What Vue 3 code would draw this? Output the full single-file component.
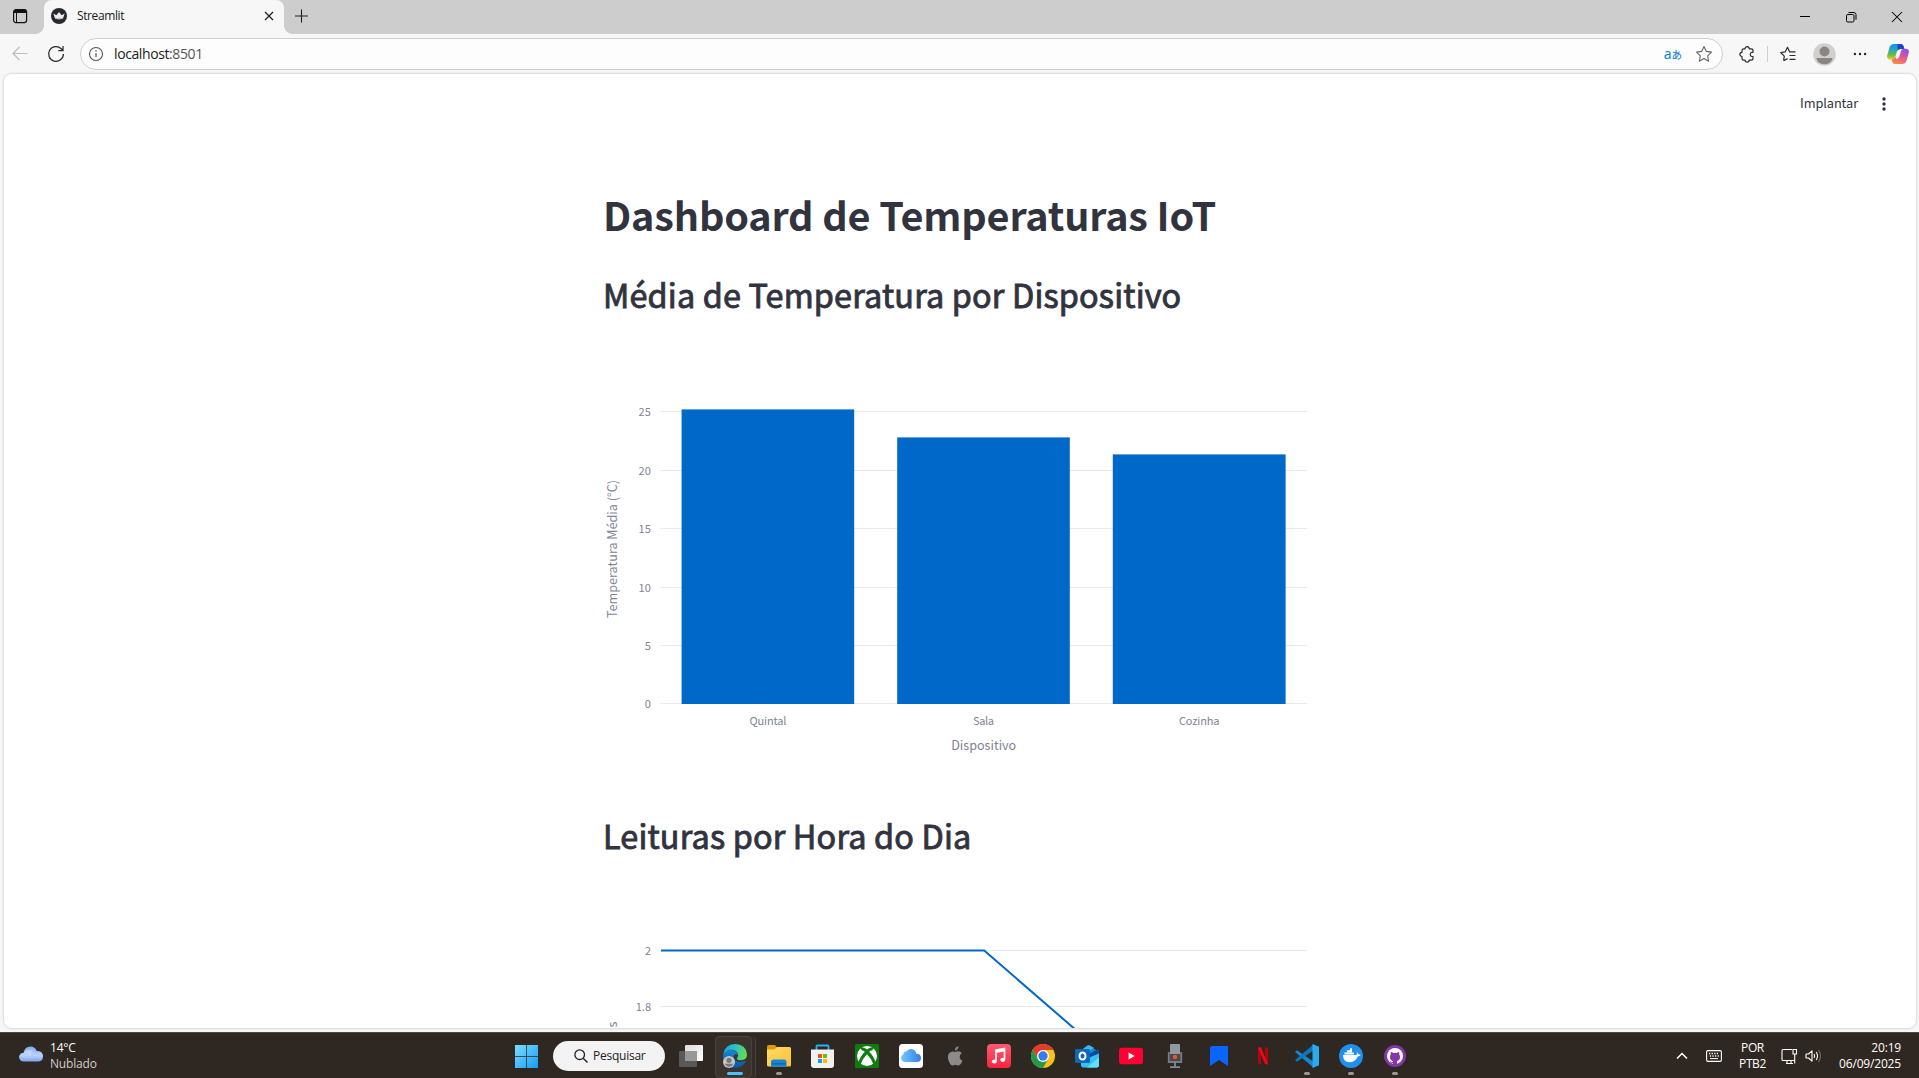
<script setup>
const barTicks = [
  { label: '25', y: 411.5 },
  { label: '20', y: 470.5 },
  { label: '15', y: 528.5 },
  { label: '10', y: 587.5 },
  { label: '5', y: 645.5 },
  { label: '0', y: 703.5 },
]
const bars = [
  { name: 'Quintal', x: 681.6, top: 409.4, w: 172.6, len: 37 },
  { name: 'Sala', x: 897.2, top: 437.4, w: 172.6, len: 21 },
  { name: 'Cozinha', x: 1112.8, top: 454.4, w: 172.8, len: 40.5 },
]
const lineTicks = [
  { label: '2', y: 950.5 },
  { label: '1.8', y: 1006.5 },
]
const X0 = 604
const Y1 = 360
const Y2 = 900
</script>

<template>
  <div class="screen">
    <header class="tabstrip">
      <div class="workspaces">
        <svg width="16" height="16" viewBox="0 0 16 16"><rect x="1.6" y="1.6" width="13" height="13" rx="2.4" fill="none" stroke="#111" stroke-width="1.2" /><path d="M1.5 5V4a2.5 2.5 0 0 1 2.5-2.5h8A2.5 2.5 0 0 1 14.500 4v1z" fill="#111" /><path d="M4.500 5v9.500" stroke="#111" stroke-width="1" /></svg>
      </div>
      <div class="tab">
        <svg class="favicon" width="16" height="16" viewBox="0 0 16 16"><circle cx="8" cy="8" r="8" fill="#262730" /><path d="M2.300 5.500 5.300 7.200 8 4 10.700 7.200 13.700 5.500 12 10.600Q8 12 4 10.600z" fill="#eee" /><path d="M4 9.500q4 1.200 8 0l-.4 1.300q-3.600 1-7.200 0z" fill="#bbb" /></svg>
        <span class="tab-title">Streamlit</span>
        <svg class="tab-close" width="10" height="10" viewBox="0 0 10 10"><path d="M1 1l8 8M9 1l-8 8" stroke="#222" stroke-width="1.3" /></svg>
      </div>
      <svg class="plus" width="14" height="14" viewBox="0 0 14 14"><path d="M7.500 .5v13M1 7h13" stroke="#222" stroke-width="1.1" /></svg>
      <div class="window-buttons">
        <svg width="12" height="12" viewBox="0 0 12 12"><path d="M1 5.500h10" stroke="#000" stroke-width="1" shape-rendering="crispEdges" /></svg>
        <svg width="12" height="12" viewBox="0 0 12 12"><rect x="1.500" y="3.500" width="7.500" height="7.500" rx="1.300" fill="none" stroke="#000" /><path d="M3.500 1.500H9A2.200 2.200 0 0 1 11 3.700v5" fill="none" stroke="#000" /></svg>
        <svg width="12" height="12" viewBox="0 0 12 12"><path d="M1 1l10 10M11 1L1 11" stroke="#000" stroke-width="1.050" /></svg>
      </div>
    </header>

    <nav class="toolbar">
      <svg class="back" width="16" height="16" viewBox="0 0 16 16"><path d="M15.500 7.500H1M7.500 1 1 7.500 7.500 14" fill="none" stroke="#bcbcbc" stroke-width="1.200" /></svg>
      <svg class="reload" width="18" height="18" viewBox="0 0 18 18"><path d="M16.400 9A7.400 7.400 0 1 1 14.200 3.700L16 5.500M16 1v4.700h-4.700" fill="none" stroke="#2b2b2b" stroke-width="1.250" /></svg>
      <div class="address">
        <svg width="16" height="16" viewBox="0 0 16 16"><circle cx="8" cy="8" r="6.500" fill="none" stroke="#555" stroke-width="1.100" /><path d="M8 7v4.300" stroke="#555" stroke-width="1.200" /><circle cx="8" cy="5" r=".8" fill="#555" /></svg>
        <span class="url">localhost<span class="port">:8501</span></span>
        <span class="translate"><span class="latin">a</span>あ</span>
        <svg class="star" width="18" height="18" viewBox="0 0 18 18"><path d="M9 1.500l2.300 4.900 5.200.7-3.800 3.700.9 5.400L9 13.600l-4.600 2.600.9-5.400L1.500 7.100l5.200-.7z" fill="none" stroke="#666" stroke-width="1.100" stroke-linejoin="round" /></svg>
      </div>
      <svg class="puzzle" width="17" height="17" viewBox="0 0 17 17"><path d="M4.700 2.800H6A2.100 2.100 0 0 1 10.200 2.800H12.300Q14 2.800 14 4.500V6.300H12.800A2.200 2.200 0 0 0 12.800 10.500H14V12.400Q14 14.100 12.300 14.100H10.200A2.100 2.100 0 0 1 6 14.100H4.700Q3 14.100 3 12.400V10.500A2.100 2.100 0 0 1 3 6.300V4.500Q3 2.800 4.700 2.800Z" fill="none" stroke="#2b2b2b" stroke-width="1.200" stroke-linejoin="round" /></svg>
      <i class="separator"></i>
      <svg class="favorites" width="18" height="18" viewBox="0 0 18 18"><path d="M11 7l4.500-.1M4.600 15.700l.7-4.600L1.700 7.500l4.600-.7L8.500 2.300l2.200 4.600h5.800M4.600 15.700l4-2.100M10.500 10.500h6M10.500 14.300h6" fill="none" stroke="#2b2b2b" stroke-width="1.200" stroke-linejoin="round" /></svg>
      <svg class="avatar" width="23" height="23" viewBox="0 0 23 23"><circle cx="11.500" cy="11.500" r="11.300" fill="#d2d0ce" /><circle cx="11.500" cy="8.500" r="5" fill="#8a8683" /><path d="M3.300 15h16.400q-.5 3-3 4.700-5 3-10.400 0-2.500-1.700-3-4.700z" fill="#8a8683" /></svg>
      <svg class="more" width="14" height="4" viewBox="0 0 14 4"><g fill="#222"><circle cx="1.900" cy="2" r="1.200" /><circle cx="7" cy="2" r="1.200" /><circle cx="12.100" cy="2" r="1.200" /></g></svg>
      <svg class="copilot" width="22" height="20" viewBox="0 0 22 20">
        <defs>
          <linearGradient id="cpl" x1="0" y1="0" x2="0" y2="1"><stop offset="0" stop-color="#1590e8" /><stop offset=".35" stop-color="#2aa5c8" /><stop offset=".68" stop-color="#63bd50" /><stop offset="1" stop-color="#f2c51e" /></linearGradient>
          <linearGradient id="cpr" x1=".7" y1="0" x2=".3" y2="1"><stop offset="0" stop-color="#8a50ee" /><stop offset=".5" stop-color="#e4588f" /><stop offset="1" stop-color="#fa8a42" /></linearGradient>
        </defs>
        <path d="M2.500 3.500Q3.500 0 7 0h7.500L13 5.500q-2.500 0-3.200 2.500L8.200 13.500Q7.500 15.500 5 15.500H3.500Q-.5 15.500.2 11.500z" fill="url(#cpl)" />
        <path d="M10.500 0H14q2 0 2.600 2l.9 3h-4.300q-1.500 0-2.500 1.200z" fill="#1748c8" />
        <path d="M19.500 16.500Q18.500 20 15 20H8q-2 0-2.600-2l-.8-2.500q3 0 3.800-2.500L9.500 15q2-.3 2.800-2.500L14 7q.7-2.300 3-2.300h1.500q4 0 3.300 4z" fill="url(#cpr)" />
        <path d="M11.500 6.300q1-.8 2.700-.8-.7.700-1 2L11.600 13q-.4 1.300-2.200 1.600z" fill="#f7f7f7" />
      </svg>
    </nav>

    <main class="page">
      <div class="deploy">
        <span class="deploy-label">Implantar</span>
        <svg width="4" height="14" viewBox="0 0 4 14"><g fill="#31333f"><circle cx="2" cy="2" r="1.700" /><circle cx="2" cy="7" r="1.700" /><circle cx="2" cy="12" r="1.700" /></g></svg>
      </div>
      <div class="content">
        <h1>Dashboard de Temperaturas IoT</h1>
        <h2 class="first">Média de Temperatura por Dispositivo</h2>
        <svg class="bar-chart" width="720" height="420" :viewBox="`${X0} ${Y1} 720 420`">
          <line v-for="t in barTicks" :key="t.label" x1="660" x2="1307" :y1="t.y" :y2="t.y" stroke="#e6eaf1" />
          <rect v-for="b in bars" :key="b.name" :x="b.x" :y="b.top" :width="b.w" :height="704 - b.top" fill="#0068c9" />
          <text v-for="t in barTicks" :key="'l' + t.label" x="650.800" :y="t.y + 4.400" text-anchor="end" class="tick">{{ t.label }}</text>
          <text v-for="b in bars" :key="'n' + b.name" :x="b.x + b.w / 2" y="725" text-anchor="middle" class="tick" :textLength="b.len">{{ b.name }}</text>
          <text x="983.700" y="750" text-anchor="middle" class="axis" textLength="65">Dispositivo</text>
          <text transform="translate(616.800 549) rotate(-90)" text-anchor="middle" class="axis" textLength="138">Temperatura Média (°C)</text>
        </svg>
        <h2 class="second">Leituras por Hora do Dia</h2>
        <svg class="line-chart" width="720" height="128" :viewBox="`${X0} ${Y2} 720 128`">
          <line v-for="t in lineTicks" :key="t.label" x1="660" x2="1307" :y1="t.y" :y2="t.y" stroke="#e6eaf1" />
          <path d="M661 950.500H984.200L1084 1037" fill="none" stroke="#0068c9" stroke-width="2" />
          <text v-for="t in lineTicks" :key="'l' + t.label" x="651" :y="t.y + 4.600" text-anchor="end" class="tick">{{ t.label }}</text>
          <text transform="translate(616.800 1027.500) rotate(-90)" class="axis">s</text>
        </svg>
      </div>
    </main>

    <footer class="taskbar">
      <div class="weather">
        <svg width="24" height="16" viewBox="0 0 24 16"><defs><linearGradient id="cl" x1="0" y1="0" x2="0" y2="1"><stop offset="0" stop-color="#7facf4" /><stop offset=".6" stop-color="#b9d2fb" /><stop offset="1" stop-color="#7ba3ec" /></linearGradient></defs><path d="M4.500 15.500a4.400 4.400 0 0 1 0-8.800Q6 .5 11.500.5q4.500 0 6.200 4.500Q24 5 24 10.300q0 5.200-5.500 5.200z" fill="url(#cl)" /><path d="M7 5q4-3 7 1-3 4-5 2.500T4 8z" fill="#cfe0ff" opacity=".6" /></svg>
        <div class="weather-text"><span>14°C</span><span class="dim">Nublado</span></div>
      </div>

      <div class="apps">
        <div class="slot"><svg width="24" height="24" viewBox="0 0 24 24"><defs><linearGradient id="win" x1="0" y1="0" x2="1" y2="1"><stop offset="0" stop-color="#7edcff" /><stop offset="1" stop-color="#149cf5" /></linearGradient></defs><path d="M0 1h11.300v11H0zM12 1h11v11H12zM0 12.700h11.300V24H0zM12 12.700h11V24H12z" fill="url(#win)" /></svg></div>
        <div class="search"><svg width="14" height="14" viewBox="0 0 14 14"><circle cx="5.700" cy="5.700" r="4.800" fill="none" stroke="#222" stroke-width="1.300" /><path d="M9.200 9.200l4.300 4.300" stroke="#222" stroke-width="1.400" /></svg><span>Pesquisar</span></div>
        <div class="slot"><svg width="24" height="24" viewBox="0 0 24 24"><defs><linearGradient id="tv" x1="0" y1="0" x2="1" y2="1"><stop offset="0" stop-color="#ddd" /><stop offset="1" stop-color="#fff" /></linearGradient></defs><rect x="6" y="1" width="18" height="16" rx="1" fill="url(#tv)" /><rect x="0" y="7" width="18" height="16" rx="1" fill="#595959" /><path d="M6 7h12v10H6z" fill="#989898" /></svg></div>
        <div class="slot active">
          <svg width="24" height="24" viewBox="0 0 24 24"><defs><linearGradient id="eg" x1="0" y1=".3" x2="1" y2=".5"><stop offset="0" stop-color="#1ba5e8" /><stop offset=".5" stop-color="#2fc5bd" /><stop offset="1" stop-color="#65dc4e" /></linearGradient><linearGradient id="eb" x1="0" y1="0" x2="0" y2="1"><stop offset="0" stop-color="#1687d6" /><stop offset="1" stop-color="#0b52a5" /></linearGradient></defs><path d="M0 12Q1 6 7.500 6q6 0 7 5-2-1.500-3.500 0-1 4 2.500 6 4 2 8.500-.3.800 0 .5.800Q19.500 24 12 24 0 23.500 0 12z" fill="url(#eb)" /><path d="M.2 10.500Q2 0 12 0q11 0 12 10.500 0 5.500-6 5.700-4.500 0-4-2 1.800-1.600 1-4Q13.500 6 8.500 5.800 3 5.700.2 10.500z" fill="url(#eg)" /><circle cx="6" cy="18" r="6" fill="#c8c6c4" /><circle cx="6" cy="16.300" r="2.600" fill="#777" /><path d="M1.900 19.800h8.200Q9 22.700 6 22.700t-4.100-2.900z" fill="#777" /></svg>
          <i class="run on"></i>
        </div>
        <div class="slot"><svg width="24" height="24" viewBox="0 0 24 24"><defs><linearGradient id="fd" x1="0" y1="0" x2="1" y2="1"><stop offset="0" stop-color="#ffdc6b" /><stop offset="1" stop-color="#fdc02f" /></linearGradient></defs><path d="M0 2.500Q0 1 1.500 1H8l2 2.500V8H0z" fill="#dd9908" /><path d="M0 5.500h7.500L10 3h12.500Q24 3 24 4.500V21q0 1.500-1.500 1.500h-21Q0 22.500 0 21z" fill="url(#fd)" /><path d="M4 22.500V18q0-2.500 2.500-2.500h10.500q2.500 0 2.500 2.500v4.500z" fill="#1585dc" /><path d="M5 19h13.500v1.500H5z" fill="#0869b5" /></svg><i class="run"></i></div>
        <div class="slot"><svg width="24" height="24" viewBox="0 0 24 24"><path d="M5.500 7V2.200q0-.7.800-.7h10.400q.8 0 .8.700V7" fill="none" stroke="#24b3f0" stroke-width="1.800" /><path d="M0 5.500h23V21q0 3-3 3H3q-3 0-3-3z" fill="#f1f1f1" /><path d="M7 10h4v4H7z" fill="#f25022" /><path d="M12 10h4v4h-4z" fill="#7fba00" /><path d="M7 15h4v4H7z" fill="#00a4ef" /><path d="M12 15h4v4h-4z" fill="#ffb900" /></svg></div>
        <div class="slot"><svg width="24" height="24" viewBox="0 0 24 24"><rect width="24" height="24" rx="1.500" fill="#107c10" /><circle cx="12" cy="12" r="10" fill="#fff" /><path d="M5 3.500Q8 2.500 12 5.500q4-3 7-2L17 6.500q-1.500 0-2.800 1.200 5 5 6.300 10.800l-2 2Q16 14 12 10.300 8 14 5.500 20.500l-2-2Q5 12.500 9.800 7.700 8.500 6.500 7 6.500z" fill="#107c10" /></svg></div>
        <div class="slot"><svg width="24" height="24" viewBox="0 0 24 24"><defs><linearGradient id="ic"><stop offset="0" stop-color="#70c8fa" /><stop offset="1" stop-color="#347ee8" /></linearGradient></defs><rect width="24" height="24" rx="3.500" fill="#fff" /><path d="M6 18a4 4 0 0 1-1.600-7.600Q4.200 7.500 7.300 7.600 9 4.700 12.300 5q4.200.5 5 4.700Q22 9.800 22 14q0 4-4 4z" fill="url(#ic)" /></svg></div>
        <div class="slot"><svg width="24" height="24" viewBox="0 0 24 24"><path d="M15.500 2q.2 3.500-3.700 4.700Q11.700 3.300 15.500 2zM12.200 8q2.300-1.300 4.300-.6 1.700.5 2.400 1.700-2.700 1.800-2.200 4.300.4 2.300 2.800 3.300-1.500 4-3.700 4.800-1 .2-3.300-.7-1.700.6-3 .7-2 0-3.700-4.200-2-5.500.5-8.300Q8.700 6.500 12.200 8z" fill="#8b8b8b" /></svg></div>
        <div class="slot"><svg width="24" height="24" viewBox="0 0 24 24"><defs><linearGradient id="mu" x1="0" y1="0" x2="0" y2="1"><stop offset="0" stop-color="#fb5b74" /><stop offset="1" stop-color="#fa233b" /></linearGradient></defs><rect width="24" height="24" rx="4" fill="url(#mu)" /><path d="M9 17V6.300l8.500-1.700v10.600M9 8.200l8.500-1.700" fill="none" stroke="#fff" stroke-width="1.700" /><ellipse cx="7.300" cy="17.500" rx="2.500" ry="2.100" fill="#fff" /><ellipse cx="15.800" cy="15.800" rx="2.500" ry="2.100" fill="#fff" /></svg></div>
        <div class="slot"><svg width="24" height="24" viewBox="0 0 24 24"><circle cx="12" cy="12" r="12" fill="#fbc116" /><path d="M1.600 6A12 12 0 0 1 22.400 6H12L7 15z" fill="#e33b2e" /><path d="M1.600 6A12 12 0 0 0 12 24l5.200-9L12 18 6.800 15z" fill="#229a48" /><circle cx="12" cy="12" r="6" fill="#fff" /><circle cx="12" cy="12" r="4.700" fill="#347df1" /></svg></div>
        <div class="slot"><svg width="24" height="24" viewBox="0 0 24 24"><path d="M4 8L12 1.600q1-.6 2 0L24 8v4L14 18 4 14z" fill="#1787da" /><path d="M8 5l5-3.400q1-.6 2 0l4 2.500L10 10z" fill="#3ab9ec" /><path d="M12 11L24 4.800V12L12 18z" fill="#0a4b99" /><path d="M6 17l18-7.500V21q0 2.500-2.500 2.500h-13Q6 23.500 6 21z" fill="#32c3f0" /><path d="M12 23.500l12-10V21q0 2.500-2.500 2.500z" fill="#64dff8" /><rect y="5" width="15" height="14" rx="1.300" fill="#1066bd" /><ellipse cx="7.500" cy="12" rx="3" ry="3.500" fill="none" stroke="#fff" stroke-width="2" /></svg></div>
        <div class="slot"><svg width="24" height="24" viewBox="0 0 24 24"><rect y="3.800" width="24" height="16.500" rx="3" fill="#ff0033" /><path d="M9.600 8.600v7l6.200-3.500z" fill="#fff" /></svg></div>
        <div class="slot"><svg width="24" height="24" viewBox="0 0 24 24"><rect x="7" y="0" width="10" height="17" rx="1" fill="#90999f" /><path d="M7 10h10v7H7z" fill="#444a50" /><path d="M5.800 8v10h12.400V8" fill="none" stroke="#747d86" stroke-width="1.900" /><path d="M12 18v5M7 23.200h10" stroke="#808a92" stroke-width="1.800" /><circle cx="12" cy="13" r="2.200" fill="#f0561d" /></svg></div>
        <div class="slot"><svg width="24" height="24" viewBox="0 0 24 24"><path d="M3 4q0-2 2-2h16v20l-9-6-9 6z" fill="#0866ff" /></svg></div>
        <div class="slot"><svg width="24" height="24" viewBox="0 0 24 24"><path d="M7 3.500h3V20l-3 .5zM14 3.500h3v17l-3-.5z" fill="#b1060f" /><path d="M7 3.500h3l7 17-3-.5z" fill="#ed0a16" /></svg></div>
        <div class="slot"><svg width="24" height="24" viewBox="0 0 24 24"><path d="M0 8l2-1.800L19 18v6z" fill="#1089cf" /><path d="M0 16l2 1.800L19 6V0z" fill="#0879bd" /><path d="M17.500 0L24 2.800v18.400L17.500 24z" fill="#2aabef" /></svg><i class="run"></i></div>
        <div class="slot"><svg width="24" height="24" viewBox="0 0 24 24"><circle cx="12" cy="12" r="12" fill="#2090ee" /><path d="M4 11h13.500q.7-1.200.4-2.700 1.300.7 1.600 2.200 1.200-.3 2.300.2-.8 1.700-3 1.800-2.500 5.800-8.500 5.800Q4 18.300 4 11z" fill="#fff" /><path d="M5.500 8.500h9.500v2H5.500zM8 6.300h5v2H8zM11 4.300h2v2h-2z" fill="#fff" /></svg><i class="run"></i></div>
        <div class="slot"><svg width="24" height="24" viewBox="0 0 24 24"><circle cx="12" cy="12" r="11" fill="#8534a9" /><circle cx="12" cy="12" r="8" fill="#fff" /><path d="M10 21v-4q-3-.5-3-4 0-1.500.8-2.400-.3-1.500.2-2.600 1.200 0 2.300 1 1.700-.5 3.400 0 1.100-1 2.300-1 .5 1.200.2 2.600.8 1 .8 2.400 0 3.500-3 4v4z" fill="#8534a9" /><path d="M10 18.500q-2 .5-2.700-1" fill="none" stroke="#8534a9" /></svg><i class="run"></i></div>
      </div>

      <div class="tray">
        <svg class="chevron" width="12" height="8" viewBox="0 0 12 8"><path d="M1 6.500l5-5 5 5" fill="none" stroke="#fff" stroke-width="1.500" /></svg>
        <svg class="keyboard" width="16" height="12" viewBox="0 0 16 12"><rect x=".6" y=".6" width="14.800" height="10.800" rx="1.300" fill="none" stroke="#fff" stroke-width="1.100" /><path d="M3 3.500h10M3.800 6h9" stroke="#fff" stroke-width="1.300" stroke-dasharray="1.300 1.300" /><path d="M4 8.600h8" stroke="#fff" /></svg>
        <div class="language"><span>POR</span><span>PTB2</span></div>
        <svg class="network" width="17" height="17" viewBox="0 0 17 17"><path d="M11 1.500H2Q1 1.500 1 2.500v9q0 1 1 1h11.500M5 15.500h7M6 12.500v3M10 12.500v3M12 1.500h3.500V6H12zM13.700 6v9.500" fill="none" stroke="#fff" stroke-width="1.100" /></svg>
        <svg class="speaker" width="18" height="14" viewBox="0 0 18 14"><path d="M1 5v4h2.500L7 12.200V1.800L3.500 5z" fill="none" stroke="#fff" stroke-width="1.100" stroke-linejoin="round" /><path d="M9 5q1.300 2 0 4M11.200 3q2.600 4 0 8" fill="none" stroke="#fff" stroke-width="1.100" /><path d="M13.500 1q4 6 0 12" fill="none" stroke="#776f69" stroke-width="1.100" /></svg>
        <div class="clock"><span>20:19</span><span>06/09/2025</span></div>
      </div>
    </footer>
  </div>
</template>

<style>
body { margin: 0; overflow: hidden; }
</style>

<style scoped>
* { box-sizing: border-box; }
svg { display: block; flex: none; }
.screen { width: 1919px; height: 1078px; display: flex; flex-direction: column; background: #f7f7f7; font-family: "Open Sans", "Noto Sans", sans-serif; overflow: hidden; }
.tabstrip { height: 34px; flex: none; display: flex; background: #cdcdcd; }
.workspaces { width: 44px; padding: 8px 0 0 12px; background: #cdcdcd; }
.tab { width: 240px; height: 34px; background: #f7f7f7; border-radius: 8px 8px 0 0; display: flex; align-items: center; padding: 0 10.500px 2px 7px; position: relative; }
.tab::before, .tab::after { content: ""; position: absolute; bottom: 0; width: 8px; height: 8px; }
.tab::before { left: -8px; background: radial-gradient(circle at 0 0, #cdcdcd 7.500px, #f7f7f7 8px); }
.tab::after { right: -8px; background: radial-gradient(circle at 100% 0, #cdcdcd 7.500px, #f7f7f7 8px); }
.tab-title { margin-left: 10px; padding-bottom: 1px; font-size: 12px; letter-spacing: -.4px; color: #1a1a1a; flex: 1; }
.plus { margin: 9px 0 0 10px; }
.window-buttons { margin-left: auto; display: flex; gap: 34px; padding: 11px 16px 0 0; }
.toolbar { height: 40px; flex: none; display: flex; align-items: center; }
.back { margin-left: 12px; }
.reload { margin-left: 19px; }
.address { width: 1643px; height: 32px; margin-left: 15px; border: 1px solid #cfcfcf; border-radius: 16px; background: #fdfdfd; display: flex; align-items: center; padding: 0 9px 0 7px; }
.url { margin-left: 10px; padding-bottom: 1px; font-size: 14px; letter-spacing: -.4px; color: #1b1b1b; flex: 1; }
.port { color: #555; }
.translate { font-family: "Open Sans", "Noto Sans CJK JP", sans-serif; font-size: 10.500px; color: #0078d4; margin: 0 13px 1px 0; display: flex; align-items: baseline; }
.latin { font-size: 14px; }
.puzzle { margin-left: 16px; }
.separator { width: 1px; height: 16px; margin-left: 11px; background: #cfcfcf; }
.favorites { margin-left: 11px; }
.avatar { margin-left: 16px; }
.more { margin-left: 17px; }
.copilot { margin-left: 20px; }
.page { width: 1912px; height: 954px; margin-left: 4px; flex: none; background: #fff; border-radius: 8px; box-shadow: 0 0 2px 1px #dadada; overflow: hidden; display: flex; flex-direction: column; font-family: "Noto Sans CJK SC", "Noto Sans", sans-serif; }
.deploy { height: 60px; flex: none; display: flex; justify-content: flex-end; align-items: center; gap: 24px; padding-right: 30px; color: #31333f; }
.deploy-label { font-size: 12.800px; letter-spacing: -.1px; padding-bottom: 3px; }
.content { width: 720px; margin-left: 600px; color: #31333f; }
h1, h2 { margin: 0 0 0 -1px; white-space: nowrap; }
h1 { height: 53px; margin-top: 53px; line-height: 53px; font-size: 39.600px; font-weight: 700; letter-spacing: -.17px; }
h2 { height: 44px; line-height: 44px; font-size: 32.400px; font-weight: 400; letter-spacing: .16px; -webkit-text-stroke: .9px #31333f; }
.first { margin-top: 32px; }
.bar-chart { margin-top: 44px; }
.second { margin-top: 33px; }
.line-chart { margin-top: 43px; }
.tick { font-size: 11px; fill: #808495; }
.axis { font-size: 12.600px; fill: #808495; }
.taskbar { height: 46px; flex: none; margin-top: auto; background: #2f2721; border-top: 1px solid #504943; display: flex; color: #fff; font-size: 12px; line-height: 16px; }
.weather { width: 505px; flex: none; display: flex; padding: 7px 0 0 19px; gap: 7px; }
.weather svg { margin-top: 6px; }
.weather-text, .language, .clock { display: flex; flex-direction: column; letter-spacing: -.18px; }
.dim { color: #cfcbc8; }
.apps { display: flex; align-items: center; }
.slot { width: 44px; height: 45px; display: flex; justify-content: center; align-items: center; padding-top: 1px; position: relative; }
.slot.active::before { content: ""; position: absolute; left: 2px; top: 3px; width: 35px; height: 40px; border: 1px solid #49413b; border-radius: 4px; background: #3b342e; box-shadow: 4px 0 0 -1px #332b26, 5px 0 0 -1px #49413b; }
.slot svg { position: relative; }
.run { position: absolute; left: 19px; bottom: 3px; width: 6px; height: 3px; border-radius: 2px; background: #9b9794; }
.run.on { left: 14px; width: 16px; background: #4cc2ff; }
.search { width: 112px; height: 30px; margin: 1px 4px 0; border-radius: 15px; background: #f3f3f3; color: #222; display: flex; align-items: center; padding-left: 21px; gap: 5px; letter-spacing: -.25px; }
.tray { margin-left: auto; display: flex; padding: 7px 18px 0 0; }
.chevron { margin: 12px 18px 0 0; }
.keyboard { margin: 10px 17px 0 0; }
.language { align-items: center; width: 27px; margin-right: 15px; letter-spacing: -.4px; }
.network { margin: 8px 7px 0 0; }
.speaker { margin: 9px 0 0; }
.clock { width: 78px; align-items: flex-end; }
</style>
